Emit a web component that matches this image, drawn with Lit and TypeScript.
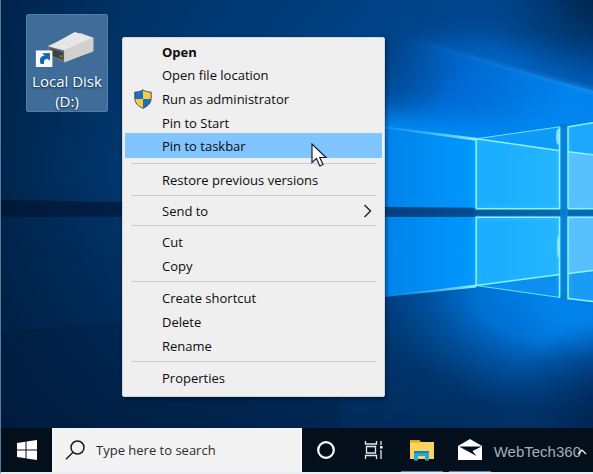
import { LitElement, html, css, svg, nothing } from "lit";
import { customElement, property } from "lit/decorators.js";

interface MenuEntry {
  label: string;
  bold?: boolean;
  active?: boolean;
  shield?: boolean;
  submenu?: boolean;
}

const GROUPS: { kind: string; entries: MenuEntry[] }[] = [
  {
    kind: "primary",
    entries: [
      { label: "Open", bold: true },
      { label: "Open file location" },
      { label: "Run as administrator", shield: true },
      { label: "Pin to Start" },
      { label: "Pin to taskbar", active: true },
    ],
  },
  { kind: "", entries: [{ label: "Restore previous versions" }] },
  { kind: "compact", entries: [{ label: "Send to", submenu: true }] },
  { kind: "", entries: [{ label: "Cut" }, { label: "Copy" }] },
  { kind: "", entries: [{ label: "Create shortcut" }, { label: "Delete" }, { label: "Rename" }] },
  { kind: "", entries: [{ label: "Properties" }] },
];

const shieldIcon = svg`
  <svg class="shield" width="18" height="20" viewBox="0 0 18 20" aria-hidden="true">
    <defs>
      <clipPath id="shield-clip">
        <path d="M9 0.8C6.8 2.4 4 3.1 0.8 3.1V9c0 5 3.2 8.300 8.200 10.300C14 17.300 17.200 14 17.200 9V3.100C14 3.100 11.200 2.400 9 .8Z" />
      </clipPath>
    </defs>
    <g clip-path="url(#shield-clip)">
      <rect width="9" height="10" fill="#1a6fc4" />
      <rect x="9" width="9" height="10" fill="#fbc93d" />
      <rect y="10" width="9" height="10" fill="#fbc93d" />
      <rect x="9" y="10" width="9" height="10" fill="#1a6fc4" />
    </g>
    <path
      d="M9 0.8C6.8 2.4 4 3.1 0.8 3.1V9c0 5 3.2 8.300 8.200 10.300C14 17.300 17.200 14 17.200 9V3.100C14 3.100 11.200 2.400 9 .8Z"
      fill="none" stroke="#4c5560" stroke-width="1" />
  </svg>`;

@customElement("desktop-wallpaper")
export class DesktopWallpaper extends LitElement {
  static styles = css`
    :host {
      display: block;
    }
    .art {
      display: block;
      width: 100%;
      height: 100%;
    }
  `;

  render() {
    return html`
      <svg class="art" viewBox="0 0 593 430" preserveAspectRatio="xMaxYMin slice" aria-hidden="true">
        <defs>
          <linearGradient id="base" x1="0" x2="1" y1="0" y2="0">
            <stop offset="0" stop-color="#00264e" />
            <stop offset="0.2" stop-color="#00376e" />
            <stop offset="0.66" stop-color="#004c98" />
            <stop offset="1" stop-color="#0056ac" />
          </linearGradient>
          <linearGradient id="dim" x1="0" x2="0" y1="0" y2="1">
            <stop offset="0" stop-color="#001a3a" stop-opacity="0.2" />
            <stop offset="0.4" stop-color="#001a3a" stop-opacity="0" />
            <stop offset="0.6" stop-color="#001a3a" stop-opacity="0.25" />
            <stop offset="1" stop-color="#001634" stop-opacity="0.6" />
          </linearGradient>
          <radialGradient id="corner" gradientUnits="userSpaceOnUse" cx="610" cy="-20" r="130">
            <stop offset="0" stop-color="#001a38" />
            <stop offset="0.35" stop-color="#002850" stop-opacity="0.8" />
            <stop offset="1" stop-color="#003a78" stop-opacity="0" />
          </radialGradient>
          <radialGradient id="lowcorner" gradientUnits="userSpaceOnUse" cx="610" cy="440" r="120">
            <stop offset="0" stop-color="#001e44" />
            <stop offset="0.4" stop-color="#002a5c" stop-opacity="0.8" />
            <stop offset="1" stop-color="#003a78" stop-opacity="0" />
          </radialGradient>
          <linearGradient id="shaft" gradientUnits="userSpaceOnUse" x1="400" y1="40" x2="540" y2="140">
            <stop offset="0" stop-color="#0055a8" stop-opacity="0" />
            <stop offset="0.4" stop-color="#0068d0" />
            <stop offset="1" stop-color="#0084ee" />
          </linearGradient>
          <linearGradient id="mid" gradientUnits="userSpaceOnUse" x1="370" y1="0" x2="480" y2="0">
            <stop offset="0" stop-color="#0080e8" />
            <stop offset="1" stop-color="#009aff" />
          </linearGradient>
          <radialGradient id="under" gradientUnits="userSpaceOnUse" cx="560" cy="285" r="190" gradientTransform="translate(0 85) scale(1 0.7)">
            <stop offset="0" stop-color="#0088f2" />
            <stop offset="0.45" stop-color="#0076dc" stop-opacity="0.9" />
            <stop offset="1" stop-color="#0056a8" stop-opacity="0" />
          </radialGradient>
          <linearGradient id="band" x1="0" x2="1" y1="0" y2="0">
            <stop offset="0" stop-color="#001938" />
            <stop offset="0.2" stop-color="#001f45" />
            <stop offset="0.65" stop-color="#00407e" />
            <stop offset="1" stop-color="#0060b0" />
          </linearGradient>
          <linearGradient id="glass" x1="0" x2="1" y1="0" y2="0">
            <stop offset="0" stop-color="#1aacff" />
            <stop offset="1" stop-color="#24b6ff" />
          </linearGradient>
          <linearGradient id="beam" x1="0" x2="1" y1="0" y2="0">
            <stop offset="0" stop-color="#2aa0f5" stop-opacity="0.3" />
            <stop offset="1" stop-color="#8ff0ff" />
          </linearGradient>
          <linearGradient id="ray" gradientUnits="userSpaceOnUse" x1="420" y1="0" x2="593" y2="0">
            <stop offset="0" stop-color="#2490f0" stop-opacity="0.15" />
            <stop offset="1" stop-color="#2a9cfa" stop-opacity="0.7" />
          </linearGradient>
          <filter id="soft" filterUnits="userSpaceOnUse" x="200" y="-100" width="500" height="600"><feGaussianBlur stdDeviation="12" /></filter>
          <filter id="haze" x="-20%" y="-20%" width="140%" height="140%"><feGaussianBlur stdDeviation="2" /></filter>
        </defs>
        <rect width="593" height="430" fill="url(#base)" />
        <rect width="593" height="430" fill="url(#dim)" />
        <path d="M400 50L470 40L640 60V120Z" fill="#0070d8" opacity="0.7" filter="url(#soft)" />
        <rect x="400" width="193" height="150" fill="url(#corner)" />
        <path d="M380 29L410 38L500 65L600 93V140H380Z" fill="url(#shaft)" />
        <path d="M420 41L500 65L600 93" fill="none" stroke="url(#ray)" stroke-width="3" filter="url(#haze)" />
        <path d="M340 108L476 124L640 136V205H340Z" fill="#008af4" filter="url(#soft)" />
        <path d="M340 122L386 127L476 139V209H340Z" fill="url(#mid)" />
        <rect x="370" y="217" width="230" height="213" fill="url(#under)" />
        <path d="M340 217H476V286L386 297L340 302Z" fill="url(#mid)" />
        <rect x="540" y="300" width="90" height="40" fill="#008cf2" opacity="0.5" filter="url(#soft)" />
        <rect x="440" y="300" width="153" height="130" fill="url(#lowcorner)" />
        <path d="M0 333L340 302V430H0Z" fill="#001532" opacity="0.2" />
        <path d="M0 200L360 207L593 209V217H0Z" fill="url(#band)" />
        <rect x="560" y="124" width="8" height="176" fill="#0078d0" />

        <path d="M476 139L560 127V209H476Z" fill="url(#glass)" />
        <path d="M476 139L560 127V151Z" fill="#0d9af8" />
        <path d="M568 127L593 123V209H568Z" fill="#58c0ff" />
        <path d="M568 127L593 123V155L568 152Z" fill="#1da8ff" />
        <path d="M476 217H560V298L476 286Z" fill="url(#glass)" />
        <path d="M476 286L560 275V298Z" fill="#0b90f0" />
        <path d="M568 217H593V302L568 299Z" fill="#58c0ff" />
        <path d="M568 274L593 271V302L568 299Z" fill="#1a9cf6" />

        <path d="M380 126L476 138V141L380 128Z" fill="url(#beam)" />
        <path d="M380 297L476 285V288L380 298Z" fill="url(#beam)" />
        <ellipse cx="558" cy="137" rx="2" ry="8" fill="#c8f6ff" opacity="0.7" />
        <ellipse cx="558" cy="247" rx="1" ry="12" fill="#c8f6ff" opacity="0.7" />
        <g fill="none" stroke="#5fe3ff" stroke-width="3" opacity="0.3" filter="url(#haze)">
          <path d="M476 139V209H560V127M568 127V209H593M476 286V217H560V298M593 217H568V299" />
        </g>
        <g fill="none" stroke="#8af4ff" stroke-width="1.5">
          <path d="M476 139V209H559.500V127.500" />
          <path d="M568 209V127L593 123M568 209H593" />
          <path d="M476 286V217.500H559.500V298" />
          <path d="M593 217.500H568V299L593 302" />
          <path d="M476 139L560 151M568 152L593 155M476 286L560 275M568 274L593 271" />
          <path d="M476 139L560 127M476 286L560 298" stroke-width="1" opacity="0.8" />
        </g>
      </svg>
    `;
  }
}

@customElement("desktop-shortcut")
export class DesktopShortcut extends LitElement {
  @property() label = "";

  static styles = css`
    .tile {
      display: flex;
      flex-direction: column;
      align-items: center;
      width: 82px;
      height: 98px;
      padding: 15px 0 0;
      border: 1px solid #4f7faa;
      border-radius: 2px;
      background: #3f6c98;
      color: #fff;
      font: 15px/20px "Open Sans", "Noto Sans", sans-serif;
      text-shadow: 0 1px 2px #0b2748;
    }
    .label {
      width: 76px;
      margin-top: 4px;
    }
  `;

  render() {
    return html`
      <button class="tile" type="button">
        <svg width="64" height="38" viewBox="0 0 64 38" aria-hidden="true">
          <path d="M13 16L46 3L59 8V21L30 33L14 27Z" fill="#c4c6c8" />
          <path d="M13 17L40 2L59 8L29 21Z" fill="#e6e6e6" />
          <path d="M29 21L59 8V22L29 33Z" fill="#d2d0cd" />
          <path d="M13 17L29 21V33L13 27Z" fill="#66696a" />
          <path d="M15 19L28 23V30L15 26Z" fill="#3c4144" />
          <circle cx="26" cy="27" r="1" fill="#7fae50" />
          <rect x="0" y="21" width="17" height="17" fill="#f7f9fb" />
          <path d="M5 35C3 30 5 26.500 9 26.500L6.500 24L14.500 23.500V31.500L12 29.500C9 30 8 31.500 8.500 35Z" fill="#1765b5" />
        </svg>
        <span class="label">${this.label}</span>
      </button>
    `;
  }
}

@customElement("context-menu")
export class ContextMenu extends LitElement {
  static styles = css`
    :host {
      display: block;
      box-sizing: border-box;
      padding: 2px 2px 3px;
      border: 1px solid #d3d6da;
      border-radius: 2px;
      background: #efefef;
      box-shadow: 1px 2px 4px rgba(0, 12, 34, 0.6);
    }
    .group {
      display: grid;
      grid-auto-rows: 1fr;
      margin: 4px 0 3px;
    }
    .group.primary {
      height: 118px;
      margin: 0 0 5px;
    }
    .group.compact {
      margin: 3px 0 2px;
    }
    .item {
      display: grid;
      grid-template-columns: 37px 1fr 19px;
      align-items: center;
      min-height: 23px;
      padding: 0;
      border: 0;
      background: none;
      color: #0c0c0c;
      font: 13px/22px "Open Sans", "Noto Sans", sans-serif;
      text-align: left;
    }
    .group:not(.primary) .item {
      height: 24px;
    }
    .item.bold {
      font-weight: 700;
    }
    .item.active {
      background: #80c5ff;
      box-shadow: 0 -1px #80c5ff;
    }
    .rule {
      height: 1px;
      margin: 0 6px;
      border: 0;
      background: #cacaca;
    }
    .icon {
      display: grid;
      padding-left: 9px;
    }
  `;

  render() {
    return html`${GROUPS.map(
      (group, i) => html`
        ${i ? html`<hr class="rule" />` : nothing}
        <div class="group ${group.kind}" role="group">
          ${group.entries.map(
            (entry) => html`
              <button
                class="item ${entry.bold ? "bold" : ""} ${entry.active ? "active" : ""}"
                type="button"
                role="menuitem"
              >
                <span class="icon">${entry.shield ? shieldIcon : nothing}</span>
                <span>${entry.label}</span>
                ${entry.submenu
                  ? html`<svg width="9" height="14" viewBox="0 0 9 14" aria-hidden="true">
                      <path d="M1.500 1L7.500 7L1.500 13" fill="none" stroke="#2b2b2b" stroke-width="1.500" />
                    </svg>`
                  : nothing}
              </button>
            `
          )}
        </div>
      `
    )}`;
  }
}

@customElement("task-bar")
export class TaskBar extends LitElement {
  static styles = css`
    :host {
      display: flex;
      height: 44px;
      background: #03101c;
    }
    .button {
      display: grid;
      place-items: center;
      flex: none;
      width: 48px;
      padding: 0;
      border: 0;
      background: none;
    }
    .button.start {
      width: 51px;
    }
    .button.open {
      background: linear-gradient(#4d8ab5, #4d8ab5) center bottom / 42px 1px no-repeat;
    }
    .search {
      display: flex;
      align-items: center;
      gap: 11px;
      flex: 0 1 237px;
      min-width: 0;
      padding-left: 13px;
      border-right: 1px solid #fff;
      background: #f3f3f3;
    }
    .field {
      flex: 1;
      min-width: 0;
      padding: 0;
      border: 0;
      outline: 0;
      background: none;
      color: #202020;
      font: 13px/20px "Open Sans", "Noto Sans", sans-serif;
    }
    .field::placeholder {
      color: #2b2b2b;
      opacity: 1;
    }
    .tray {
      display: flex;
      flex: 1;
      align-items: center;
      justify-content: flex-end;
      padding-right: 6px;
    }
    .mark {
      padding-top: 4px;
      color: #a7adb3;
      font: 15px/20px "Liberation Sans", sans-serif;
    }
    .chevron {
      padding: 0;
      border: 0;
      background: none;
      margin-left: -4px;
    }
  `;

  render() {
    return html`
      <button class="button start" type="button" aria-label="Start">
        <svg width="20" height="20" viewBox="0 0 20 20" fill="#fff" aria-hidden="true">
          <path d="M0 3L8.500 1.800V9.500H0ZM9.500 1.600L20 0V9.500H9.500ZM0 10.500H8.500V18.200L0 17ZM9.500 10.500H20V20L9.500 18.400Z" />
        </svg>
      </button>
      <label class="search">
        <svg width="20" height="20" viewBox="0 0 20 20" fill="none" stroke="#1d1d1d" stroke-width="1.500" aria-hidden="true">
          <circle cx="12.500" cy="7.500" r="6.500" />
          <path d="M8 12.200L1 19.200" />
        </svg>
        <input class="field" type="text" placeholder="Type here to search" aria-label="Search" />
      </label>
      <button class="button" type="button" aria-label="Cortana">
        <svg width="20" height="20" viewBox="0 0 20 20" aria-hidden="true">
          <circle cx="10" cy="10" r="7.800" fill="none" stroke="#fff" stroke-width="2.200" />
        </svg>
      </button>
      <button class="button" type="button" aria-label="Task View">
        <svg width="20" height="20" viewBox="0 0 20 20" fill="none" stroke="#e4e7ea" stroke-width="1.300" aria-hidden="true">
          <path d="M1.500 1V4H12.500V1M1.500 19V15.500H12.500V19M2.500 6.500H11.500V13H2.500ZM17 1V5M17 10V19" />
          <rect x="16" y="6" width="2.500" height="2.500" fill="#fff" stroke="none" />
        </svg>
      </button>
      <button class="button open" type="button" aria-label="File Explorer">
        <svg width="26" height="22" viewBox="0 0 26 22" aria-hidden="true">
          <path d="M1 1H10L12 3H25V20H1Z" fill="#fbd45c" />
          <path d="M1 1H10L11.500 3.500H1Z" fill="#e9a520" />
          <path d="M5 12H20V21.500H16V17H9V21.500H5Z" fill="#2aa5dc" />
          <path d="M5 12H20V14H5Z" fill="#1684bd" />
        </svg>
      </button>
      <button class="button open" type="button" aria-label="Mail">
        <svg width="26" height="22" viewBox="0 0 26 22" aria-hidden="true">
          <path d="M1 7L13 0L25 7V21H1Z" fill="#fff" />
          <path d="M2 7.500H24.500L15.500 12L19.500 17Z" fill="#03101c" />
        </svg>
      </button>
      <div class="tray">
        <span class="mark">WebTech360</span>
        <button class="chevron" type="button" aria-label="Show hidden icons">
          <svg width="10" height="7" viewBox="0 0 10 7" aria-hidden="true">
            <path d="M1 6L5 2L9 6" fill="none" stroke="#fff" stroke-width="1.200" />
          </svg>
        </button>
      </div>
    `;
  }
}

@customElement("app-root")
export class AppRoot extends LitElement {
  static styles = css`
    :host {
      display: grid;
      grid-template-rows: 1fr auto;
      box-sizing: border-box;
      min-height: 100vh;
      border-left: 1px solid #5d7898;
      border-bottom: 2px solid #e9edf1;
      background: #00264e;
    }
    .desktop {
      position: relative;
      display: flex;
      align-items: flex-start;
      gap: 14px;
      padding: 14px 25px 31px;
      overflow: hidden;
      isolation: isolate;
    }
    .wallpaper {
      position: absolute;
      inset: 0;
      z-index: -1;
    }
    .menu {
      flex: none;
      width: 263px;
      margin-top: 23px;
    }
    .pointer {
      position: absolute;
      top: 143px;
      left: 310px;
    }
  `;

  render() {
    return html`
      <main class="desktop">
        <desktop-wallpaper class="wallpaper"></desktop-wallpaper>
        <desktop-shortcut label="Local Disk (D:)"></desktop-shortcut>
        <context-menu class="menu" role="menu"></context-menu>
        <svg class="pointer" width="17" height="25" viewBox="0 0 17 25" aria-hidden="true">
          <path d="M1 1V19.500L5.500 15.500L8.800 23L12 21.500L8.800 14.500H15Z" fill="#fff" stroke="#16202c" stroke-width="1.200" />
        </svg>
      </main>
      <task-bar></task-bar>
    `;
  }
}
